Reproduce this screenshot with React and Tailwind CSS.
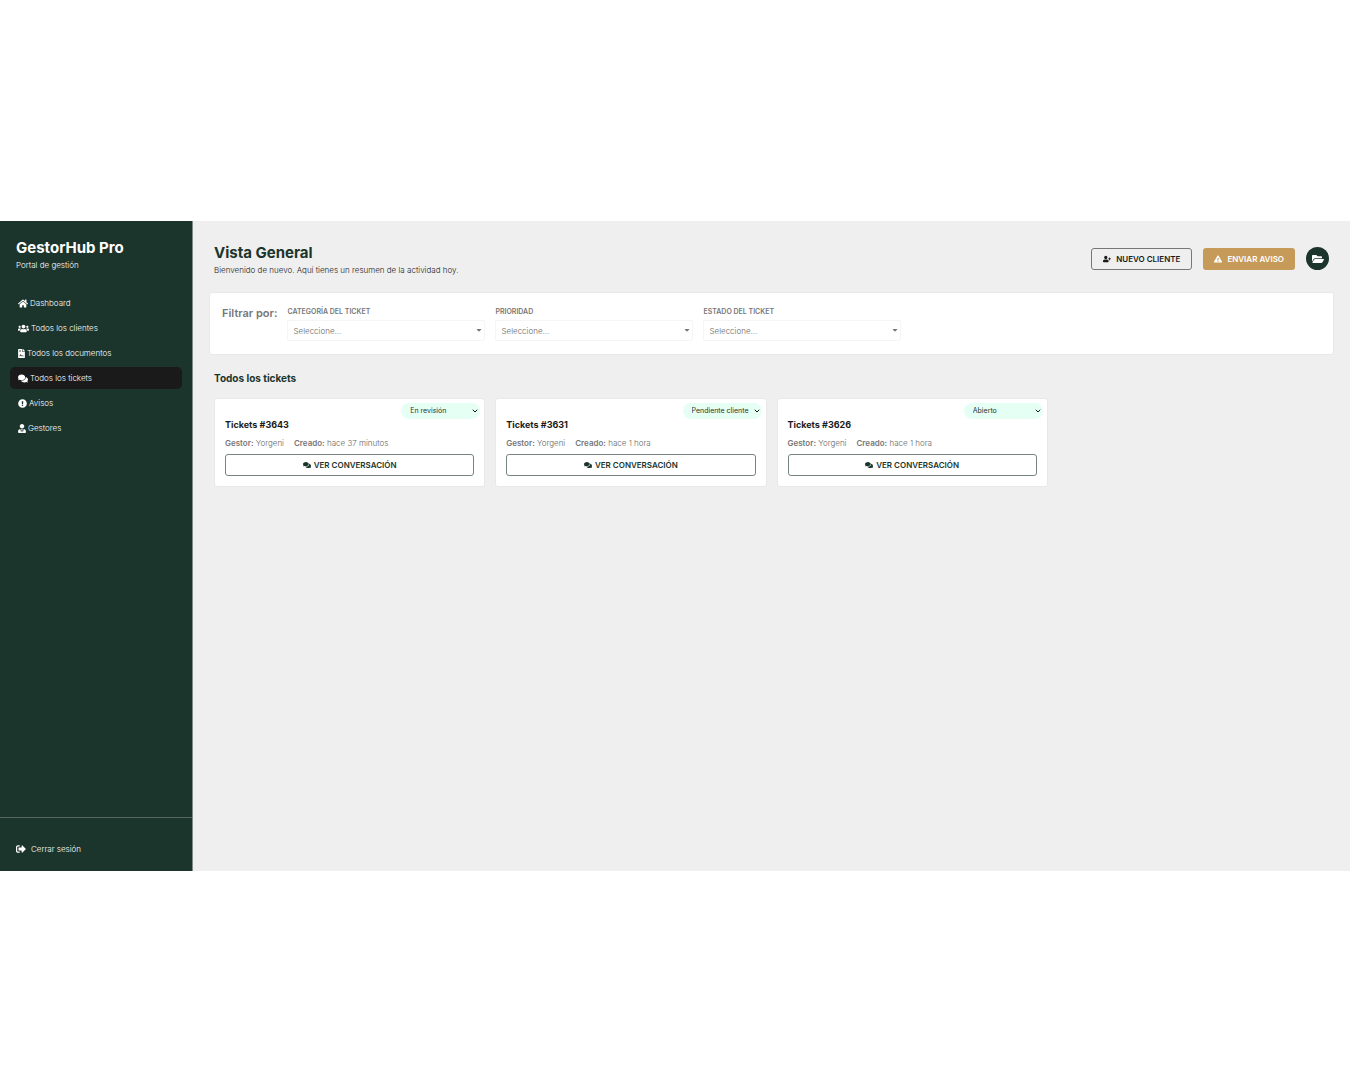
import { useState } from 'react';
import {
  FaHome,
  FaUsers,
  FaFileContract,
  FaComments,
  FaExclamationCircle,
  FaExclamationTriangle,
  FaUserTie,
  FaUserPlus,
  FaFolderOpen,
  FaSignOutAlt,
  FaCaretDown,
} from 'react-icons/fa';
import { ChevronDown } from 'lucide-react';

const NAV_ITEMS = [
  { label: 'Dashboard',            icon: FaHome,              width: 'w-[10px]' },
  { label: 'Todos los clientes',   icon: FaUsers,             width: 'w-[11px]' },
  { label: 'Todos los documentos', icon: FaFileContract,      width: 'w-[7px]' },
  { label: 'Todos los tickets',    icon: FaComments,          width: 'w-[10px]', active: true },
  { label: 'Avisos',               icon: FaExclamationCircle, width: 'w-[9px]' },
  { label: 'Gestores',             icon: FaUserTie,           width: 'w-[8px]' },
];

const FILTERS = [
  { id: 'categoria', label: 'Categoría del ticket', options: ['Documentación', 'Facturación', 'Consulta'] },
  { id: 'prioridad', label: 'Prioridad',            options: ['Alta', 'Media', 'Baja'] },
  { id: 'estado',    label: 'Estado del ticket',    options: ['Abierto', 'En revisión', 'Pendiente cliente'] },
];

const STATUSES = ['Abierto', 'En revisión', 'Pendiente cliente', 'Cerrado'];

const TICKETS = [
  { id: 3643, manager: 'Yorgeni', created: 'hace 37 minutos', status: 'En revisión' },
  { id: 3631, manager: 'Yorgeni', created: 'hace 1 hora',     status: 'Pendiente cliente' },
  { id: 3626, manager: 'Yorgeni', created: 'hace 1 hora',     status: 'Abierto' },
];

const Sidebar = () => (
  <aside className="flex w-[193px] shrink-0 flex-col border-r border-[#7d8d85] bg-[#1c352c] text-white">
    <div className="px-4 pt-4">
      <p className="text-[15px] leading-[22px] font-bold">GestorHub Pro</p>
      <p className="text-[8px] leading-3 font-light">Portal de gestión</p>
    </div>

    <nav className="mt-[21px] flex flex-col gap-[3px] px-[10px]">
      {NAV_ITEMS.map(({ label, icon: Icon, width, active }) => (
        <a
          key={label}
          href="#"
          className={`flex h-[22px] items-center gap-[2px] rounded-[5px] px-2 text-[8px] font-light ${active ? 'bg-[#1a1a1a]' : ''}`}
        >
          <Icon className={`h-[9px] ${width}`} />
          {label}
        </a>
      ))}
    </nav>

    <div className="mt-auto border-t border-[#54675f] px-4 pt-[23px] pb-[14px]">
      <a href="#" className="flex h-4 items-center gap-[5px] text-[8px] font-light">
        <FaSignOutAlt size={10} />
        Cerrar sesión
      </a>
    </div>
  </aside>
);

const Header = () => (
  <header className="flex items-start justify-between px-[5px]">
    <div>
      <h1 className="text-[15px] leading-[22px] font-bold text-[#1c352c]">Vista General</h1>
      <p className="text-[8px] leading-3 font-light text-[#1a1a1a]">
        Bienvenido de nuevo. Aquí tienes un resumen de la actividad hoy.
      </p>
    </div>
    <div className="flex items-center gap-[11px] pt-[5px]">
      <button className="flex h-[22px] items-center gap-[5px] rounded-[3px] border border-[#777777] px-[11px] text-[8px] font-semibold text-[#1a1a1a] uppercase">
        <FaUserPlus size={8} />
        Nuevo cliente
      </button>
      <button className="flex h-[22px] items-center gap-[5px] rounded-[3px] bg-[#c69a58] px-[11px] text-[8px] font-semibold text-white uppercase">
        <FaExclamationTriangle size={8} />
        Enviar aviso
      </button>
      <button aria-label="Documentos" className="flex size-[23px] items-center justify-center rounded-full bg-[#1c352c] text-white">
        <FaFolderOpen size={12} />
      </button>
    </div>
  </header>
);

const FilterBar = () => (
  <section className="mt-4 flex min-h-[63px] gap-[10px] rounded-[3px] border border-[#e8e8e8] bg-white px-3 pt-3 pb-3">
    <p className="text-[11px] leading-4 font-semibold text-[#777777]">Filtrar por:</p>
    {FILTERS.map(filter => (
      <div key={filter.id} className="w-[198px] pt-px">
        <label htmlFor={filter.id} className="block text-[7px] leading-3 font-semibold text-[#777777] uppercase">
          {filter.label}
        </label>
        <div className="relative mt-[2px]">
          <select
            id={filter.id}
            className="block h-[21px] w-full appearance-none rounded-[2px] border border-[#f5f5f5] bg-white px-[5px] text-[8px] font-light text-[#666666]"
          >
            <option>Seleccione...</option>
            {filter.options.map(option => <option key={option}>{option}</option>)}
          </select>
          <FaCaretDown size={8} className="pointer-events-none absolute top-[6px] right-[2px] text-[#777777]" />
        </div>
      </div>
    ))}
  </section>
);

const TicketCard = ({ ticket }) => {
  const [status, setStatus] = useState(ticket.status);

  return (
    <article className="rounded-[3px] border border-[#e8e8e8] bg-white px-[10px] pt-1 pb-[10px]">
      <div className="-mr-[6px] flex justify-end">
        <div className="relative">
          <select
            aria-label={`Estado del ticket ${ticket.id}`}
            value={status}
            onChange={e => setStatus(e.target.value)}
            className="block h-4 w-[79px] appearance-none rounded-full bg-[#e6fff5] pr-3 pl-[9px] text-[7px] text-[#1c352c]"
          >
            {STATUSES.map(option => <option key={option}>{option}</option>)}
          </select>
          <ChevronDown size={8} strokeWidth={3} className="pointer-events-none absolute top-1 right-px text-[#1a1a1a]" />
        </div>
      </div>
      <h3 className="text-[9px] leading-3 font-bold text-[#1a1a1a]">Tickets #{ticket.id}</h3>
      <p className="mt-[6px] flex gap-[10px] text-[8px] leading-3 font-light text-[#666666]">
        <span><b className="font-semibold text-[#777777]">Gestor:</b> {ticket.manager}</span>
        <span><b className="font-semibold text-[#777777]">Creado:</b> {ticket.created}</span>
      </p>
      <button className="mt-[5px] flex h-[22px] w-full items-center justify-center gap-[3px] rounded-[3px] border border-[#77857f] text-[8px] font-semibold text-[#1c352c] uppercase">
        <FaComments size={8} />
        Ver conversación
      </button>
    </article>
  );
};

const App = () => (
  <div className="min-h-screen bg-white pt-[221px] font-['Inter',sans-serif]">
    <div className="flex min-h-[650px]">
      <Sidebar />
      <main className="min-w-0 grow bg-[#efefef] px-4 pt-[21px]">
        <Header />
        <FilterBar />
        <section className="px-[5px] pt-[15px]">
          <h2 className="text-[10px] leading-4 font-bold text-[#1c352c]">Todos los tickets</h2>
          <div className="mt-3 grid grid-cols-4 gap-[10px]">
            {TICKETS.map(ticket => <TicketCard key={ticket.id} ticket={ticket} />)}
          </div>
        </section>
      </main>
    </div>
  </div>
);

export default App;
